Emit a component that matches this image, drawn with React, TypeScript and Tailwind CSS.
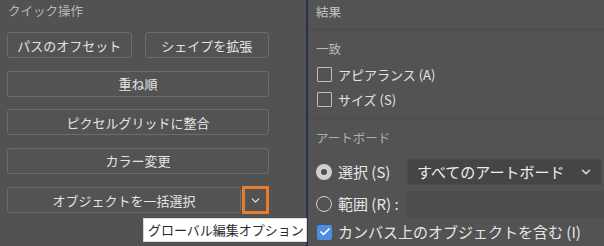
import { ChevronDown, Check } from "lucide-react";

const font = { fontFamily: '"Noto Sans CJK JP", "Noto Sans", sans-serif' };

const Btn = ({ label, className = "" }: { label: string; className?: string }) => (
  <button
    className={`h-[26px] rounded-[3px] border border-[#6c6c6c] bg-[#535353] text-[13px] leading-none text-[#e4e4e4] ${className}`}
  >
    {label}
  </button>
);

const CheckBox = ({ checked = false }: { checked?: boolean }) =>
  checked ? (
    <span className="flex h-[15px] w-[15px] items-center justify-center rounded-[2px] bg-[#4a8fe3]">
      <Check className="h-[12px] w-[12px] text-white" strokeWidth={3.5} />
    </span>
  ) : (
    <span className="h-[15px] w-[15px] rounded-[1px] border border-[#bdbdbd]" />
  );

const Radio = ({ checked = false }: { checked?: boolean }) =>
  checked ? (
    <span className="flex h-[16px] w-[16px] items-center justify-center rounded-full bg-[#cfcfcf]">
      <span className="h-[6px] w-[6px] rounded-full bg-[#4e4e4e]" />
    </span>
  ) : (
    <span className="h-[16px] w-[16px] rounded-full border-[1.5px] border-[#cfcfcf]" />
  );

export default function App() {
  return (
    <div className="flex h-[246px] w-[604px] overflow-hidden bg-[#535353]" style={font}>
      {/* Quick actions */}
      <div className="relative w-[306px] shrink-0 bg-[#525252]">
        <div className="h-[32px] pl-[8px] pt-[1px] text-[12.5px] leading-[20px] text-[#b8b8b8]">
          クイック操作
        </div>
        <div className="ml-[7px] flex w-[262px] flex-col gap-[12.5px]">
          <div className="flex gap-[13px]">
            <Btn label="パスのオフセット" className="w-[125px]" />
            <Btn label="シェイプを拡張" className="w-[125px]" />
          </div>
          <Btn label="重ね順" className="w-full" />
          <Btn label="ピクセルグリッドに整合" className="w-full" />
          <Btn label="カラー変更" className="w-full" />
          <div className="flex items-center gap-[1px]">
            <Btn label="オブジェクトを一括選択" className="w-[234px]" />
            <button className="flex h-[28px] w-[27px] items-center justify-center border-[3px] border-[#ea7a2f] bg-[#535353]">
              <ChevronDown className="h-[13px] w-[13px] text-[#e0e0e0]" strokeWidth={2.5} />
            </button>
          </div>
        </div>
        <div className="absolute left-[143px] top-[218px] z-10 flex h-[24px] w-[164px] items-center border border-[#d8d8d8] bg-white pl-[4px] text-[13px] text-[#2a2a2a]">
          グローバル編集オプション
        </div>
      </div>

      <div className="w-[2px] shrink-0 bg-[#26324c]" />

      {/* Results */}
      <div className="flex-1 bg-[#535353]">
        <div className="h-[30px] border-b border-[#4a4a4a] pl-[8px] pt-[2px] text-[12.5px] leading-[20px] text-[#c4c4c4]">
          結果
        </div>
        <div className="pl-[8px] pt-[9px] text-[12.5px] leading-[20px] text-[#b8b8b8]">一致</div>
        <div className="mt-[8px] flex flex-col gap-[10px] pl-[9px]">
          <label className="flex h-[15px] items-center gap-[6px] text-[13px] text-[#e4e4e4]">
            <CheckBox />
            アピアランス (A)
          </label>
          <label className="flex h-[15px] items-center gap-[6px] text-[13px] text-[#e4e4e4]">
            <CheckBox />
            サイズ (S)
          </label>
        </div>
        <div className="mt-[11px] border-t border-[#4a4a4a]" />
        <div className="pl-[8px] pt-[9px] text-[12.5px] leading-[20px] text-[#b0b0b0]">アートボード</div>
        <div className="mt-[11px] flex h-[26px] items-center pl-[8px]">
          <div className="flex w-[91px] items-center gap-[6px] text-[15px] text-[#e6e6e6]">
            <Radio checked />
            選択 (S)
          </div>
          <div className="flex h-[26px] w-[195px] items-center justify-between rounded-[2px] border border-[#4c4c4c] bg-[#454545] pl-[9px] pr-[8px] text-[15px] text-[#ededed]">
            すべてのアートボード
            <ChevronDown className="h-[14px] w-[14px] text-[#e0e0e0]" strokeWidth={2.5} />
          </div>
        </div>
        <div className="mt-[6px] flex h-[26px] items-center pl-[8px]">
          <div className="flex w-[91px] items-center gap-[6px] text-[15px] text-[#e6e6e6]">
            <Radio />
            範囲 (R) :
          </div>
          <div className="h-[26px] flex-1 bg-[#4d4d4d]" />
        </div>
        <label className="mt-[7px] flex h-[16px] items-center gap-[6px] pl-[9px] text-[15px] text-[#e6e6e6]">
          <CheckBox checked />
          カンバス上のオブジェクトを含む (I)
        </label>
      </div>
    </div>
  );
}
